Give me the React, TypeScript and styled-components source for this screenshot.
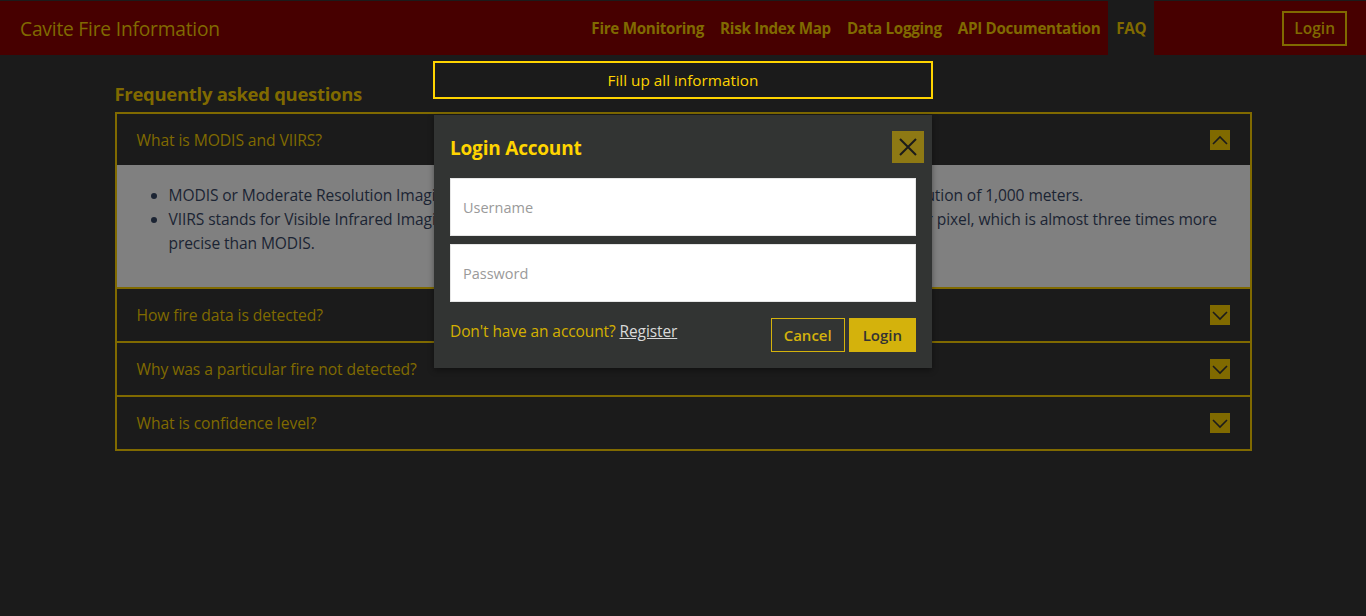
import React from "react";
import styled, { createGlobalStyle } from "styled-components";

const Global = createGlobalStyle`
  html, body { margin: 0; padding: 0; background: #1b1b1b; }
  body { font-family: "Open Sans", "Noto Sans", sans-serif; }
  * { box-sizing: border-box; }
`;

const OLIVE = "#806a00";
const YELLOW = "#ffd400";

const Page = styled.div`
  position: relative;
  min-height: 616px;
  background: #1b1b1b;
  padding-top: 1px;
`;

const Header = styled.header`
  display: flex;
  align-items: center;
  height: 54px;
  background: #470000;
  padding: 0 19px 0 20px;
`;

const Brand = styled.div`
  color: ${OLIVE};
  font-size: 19.2px;
  letter-spacing: -0.2px;
`;

const Nav = styled.nav`
  display: flex;
  align-items: stretch;
  height: 100%;
  margin-left: auto;
`;

const NavItem = styled.a<{ $active?: boolean }>`
  display: flex;
  align-items: center;
  padding: 0 8px;
  font-size: 15.2px;
  font-weight: 700;
  letter-spacing: -0.3px;
  color: ${OLIVE};
  background: ${(p) => (p.$active ? "#1b1b1b" : "transparent")};
`;

const HeaderButton = styled.button`
  margin-left: 128px;
  height: 35px;
  padding: 0 10px;
  background: transparent;
  border: 2px solid ${OLIVE};
  color: ${OLIVE};
  font-family: inherit;
  font-size: 15.5px;
  font-weight: 600;
`;

const Main = styled.main`
  width: 1137px;
  margin: 0 auto;
  padding-top: 26px;
`;

const Heading = styled.h2`
  margin: 0 0 5px;
  font-size: 18.5px;
  font-weight: 700;
  letter-spacing: -0.3px;
  color: ${OLIVE};
  line-height: 26px;
`;

const Accordion = styled.div`
  border: 2px solid ${OLIVE};
`;

const Item = styled.div`
  & + & { border-top: 2px solid ${OLIVE}; }
`;

const ItemHead = styled.div<{ $tall?: boolean }>`
  display: flex;
  align-items: center;
  justify-content: space-between;
  height: ${(p) => (p.$tall ? "51px" : "52px")};
  padding: ${(p) => (p.$tall ? "1px 20px 0" : "0 20px")};
  color: ${OLIVE};
  font-size: 15.7px;
  letter-spacing: -0.1px;
`;

const Chevron = styled.span`
  display: flex;
  align-items: center;
  justify-content: center;
  width: 20px;
  height: 20px;
  background: ${OLIVE};
`;

const ItemBody = styled.div`
  background: #808080;
  padding: 18px 20px 32px 32px;
  color: #1b2433;
  font-size: 15.6px;
  line-height: 24px;
  letter-spacing: -0.1px;
  ul { margin: 0; padding-left: 20px; }
`;

const Toast = styled.div`
  position: absolute;
  top: 61px;
  left: 433px;
  width: 500px;
  height: 38px;
  display: flex;
  align-items: center;
  justify-content: center;
  border: 2px solid ${YELLOW};
  background: #1b1b1b;
  color: ${YELLOW};
  font-size: 15.3px;
`;

const Modal = styled.div`
  position: absolute;
  top: 115px;
  left: 434px;
  width: 498px;
  height: 253px;
  background: #323433;
  padding: 16px 16px 0;
  box-shadow: 0 2px 6px rgba(0, 0, 0, 0.4);
`;

const ModalHead = styled.div`
  display: flex;
  align-items: center;
  justify-content: space-between;
  height: 32px;
  margin-right: -8px;
  margin-bottom: 15px;
`;

const ModalTitle = styled.h3`
  margin: 2px 0 0;
  color: ${YELLOW};
  font-size: 19px;
  font-weight: 700;
  letter-spacing: -0.2px;
`;

const Close = styled.button`
  width: 32px;
  height: 32px;
  border: none;
  padding: 0;
  background: #8e7914;
  display: flex;
  align-items: center;
  justify-content: center;
`;

const Input = styled.input`
  display: block;
  width: 100%;
  height: 58px;
  border: 1px solid #e6e6e6;
  padding: 0 12px;
  margin-bottom: 8px;
  font-family: inherit;
  font-size: 14.5px;
  background: #fff;
  &::placeholder { color: #9a9a9a; }
`;

const Footer = styled.div`
  display: flex;
  align-items: flex-start;
  margin-top: 8px;
`;

const Prompt = styled.div`
  color: #d4b000;
  font-size: 15.5px;
  margin-top: 10px;
  letter-spacing: -0.1px;
  a { color: #d9d9d9; text-decoration: underline; }
`;

const Actions = styled.div`
  display: flex;
  gap: 4px;
  margin-left: auto;
  margin-top: 8px;
`;

const Btn = styled.button<{ $primary?: boolean }>`
  height: 34px;
  padding: 0 ${(p) => (p.$primary ? "13px" : "12px")};
  font-family: inherit;
  font-size: 15px;
  font-weight: 600;
  border: 1px solid #d4b20c;
  background: ${(p) => (p.$primary ? "#d4b20c" : "transparent")};
  color: ${(p) => (p.$primary ? "#333" : "#d4b20c")};
`;

const ChevronIcon = ({ up }: { up?: boolean }) => (
  <svg width="18" height="12" viewBox="0 0 18 12">
    <polyline
      points={up ? "2,10 9,3 16,10" : "2,3 9,10 16,3"}
      fill="none"
      stroke="#1b1b1b"
      strokeWidth="1.6"
    />
  </svg>
);

const faqs = [
  "How fire data is detected?",
  "Why was a particular fire not detected?",
  "What is confidence level?",
];

export default function App() {
  return (
    <>
      <Global />
      <Page>
        <Header>
          <Brand>Cavite Fire Information</Brand>
          <Nav>
            <NavItem>Fire Monitoring</NavItem>
            <NavItem>Risk Index Map</NavItem>
            <NavItem>Data Logging</NavItem>
            <NavItem>API Documentation</NavItem>
            <NavItem $active>FAQ</NavItem>
          </Nav>
          <HeaderButton>Login</HeaderButton>
        </Header>
        <Main>
          <Heading>Frequently asked questions</Heading>
          <Accordion>
            <Item>
              <ItemHead $tall>
                What is MODIS and VIIRS?
                <Chevron>
                  <ChevronIcon up />
                </Chevron>
              </ItemHead>
              <ItemBody>
                <ul>
                  <li>
                    MODIS or Moderate Resolution Imaging Spectroradiometer is a satellite that detects fires at a spatial resolution of 1,000 meters.
                  </li>
                  <li>
                    VIIRS stands for Visible Infrared Imaging Radiometer Suite, which has a spatial resolution of 375 meters per pixel, which is almost three times more precise than MODIS.
                  </li>
                </ul>
              </ItemBody>
            </Item>
            {faqs.map((q) => (
              <Item key={q}>
                <ItemHead>
                  {q}
                  <Chevron>
                    <ChevronIcon />
                  </Chevron>
                </ItemHead>
              </Item>
            ))}
          </Accordion>
        </Main>
        <Toast>Fill up all information</Toast>
        <Modal>
          <ModalHead>
            <ModalTitle>Login Account</ModalTitle>
            <Close>
              <svg width="18" height="18" viewBox="0 0 18 18">
                <path d="M1 1 L17 17 M17 1 L1 17" stroke="#1b1b1b" strokeWidth="2" />
              </svg>
            </Close>
          </ModalHead>
          <Input placeholder="Username" />
          <Input type="password" placeholder="Password" />
          <Footer>
            <Prompt>
              Don't have an account? <a>Register</a>
            </Prompt>
            <Actions>
              <Btn>Cancel</Btn>
              <Btn $primary>Login</Btn>
            </Actions>
          </Footer>
        </Modal>
      </Page>
    </>
  );
}
